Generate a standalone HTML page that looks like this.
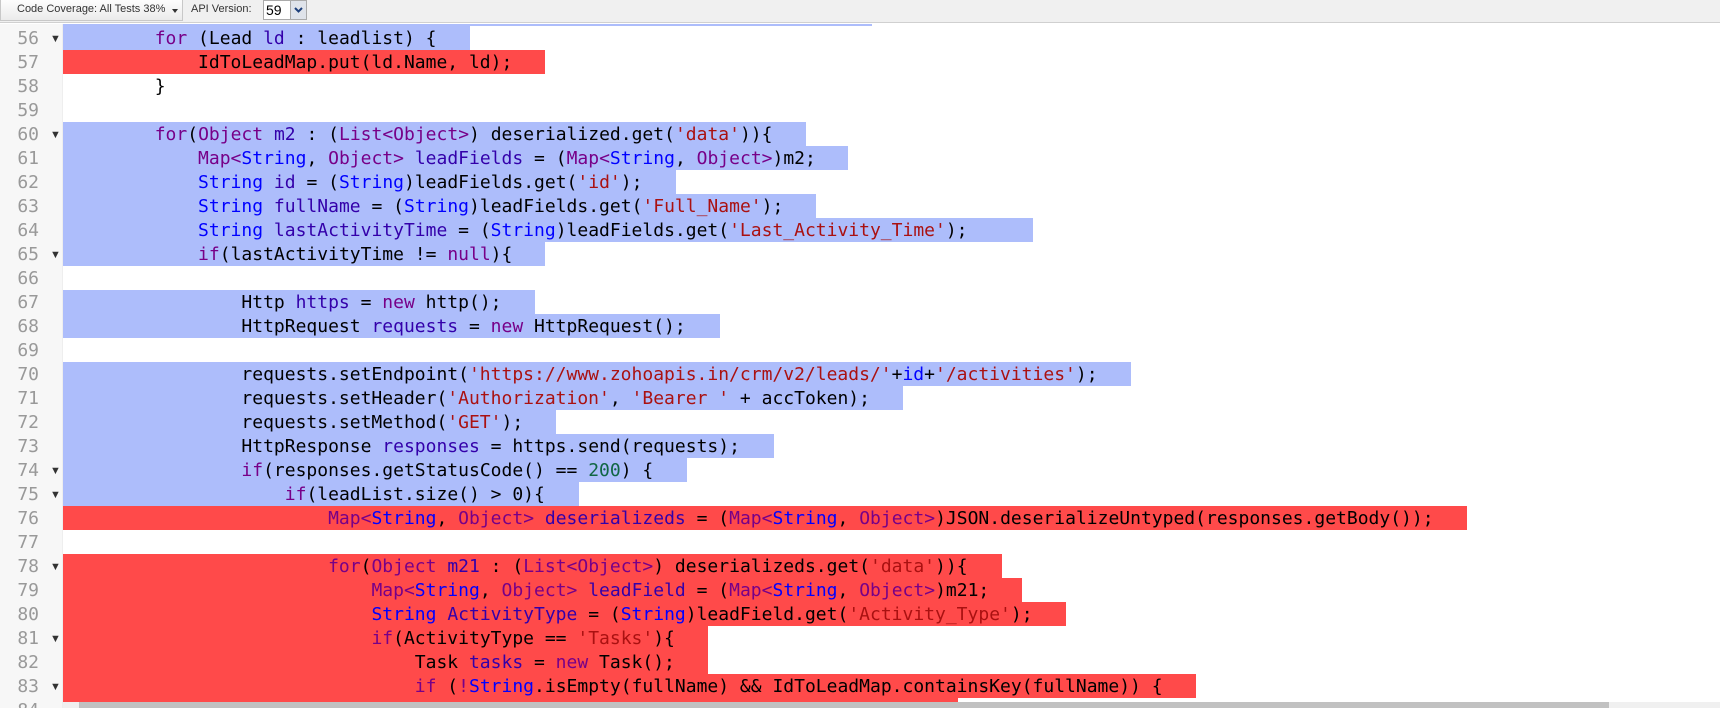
<!DOCTYPE html>
<html><head><meta charset="utf-8"><style>
*{margin:0;padding:0;box-sizing:border-box}
body{width:1720px;height:708px;overflow:hidden;background:#fff;position:relative;font-family:"Liberation Sans",sans-serif}
#tb{position:absolute;left:0;top:0;width:1720px;height:23px;background:#f0f0f0;border-bottom:1px solid #d0d0d0}
#btn{position:absolute;left:0;top:0;width:183px;height:21px;background:linear-gradient(#fdfdfd,#ebebeb);border:1px solid #c8c8c8;border-top:none;font-size:11px;color:#333;line-height:19px;padding-left:16px}
#btn:after{content:"";position:absolute;left:171px;top:9px;border:3px solid transparent;border-top:4px solid #333}
#api{position:absolute;left:191px;top:0;font-size:11px;line-height:19px;color:#333}
#sel{position:absolute;left:263px;top:0;width:28px;height:20px;background:#fff;border:1px solid #aaa;font-size:14px;line-height:18px;padding-left:2px;color:#000}
#selb{position:absolute;left:290px;top:0;width:17px;height:20px;background:#dfe3ea;border:1px solid #aaa}
#ed{position:absolute;left:0;top:24px;width:1720px;height:684px;overflow:hidden}
#gut{position:absolute;left:0;top:0;width:63px;height:686px;background:#f7f7f7;border-right:1px solid #eee}
.r{position:absolute;left:0;height:24px}
.hb{background:#adbdfb}.hr{background:#ff4a4a}
.ln{position:absolute;left:0;width:39px;text-align:right;font-family:"DejaVu Sans Mono","Liberation Mono",monospace;font-size:18px;line-height:24px;color:#999;height:24px}
.ar{position:absolute;left:50px;font-size:11px;line-height:24px;color:#333;height:24px}
pre{position:absolute;left:68px;top:0;font-family:"DejaVu Sans Mono","Liberation Mono",monospace;font-size:18px;line-height:24px;color:#000}
.k{color:#708}.t{color:#00f}.d{color:#30a}.s{color:#a11}.n{color:#164}
#sb{position:absolute;left:63px;top:702px;width:1657px;height:6px;background:#f0f0f0}
#th{position:absolute;left:79px;top:702px;width:1530px;height:6px;background:#c1c1c1}
</style></head><body>
<div id="tb"><div id="btn">Code Coverage: All Tests 38%</div><div id="api">API Version:</div><div id="sel">59</div><div id="selb"><svg width="15" height="18" viewBox="0 0 15 18"><path d="M4 7l3.5 3.5L11 7" stroke="#1d3f7a" stroke-width="2" fill="none"/></svg></div></div>
<div id="ed">
<div id="gut"></div>
<div class="r hb" style="top:-21.6px;left:63px;width:809px"></div>
<div class="r hb" style="top:2.4px;left:63px;width:407px"></div>
<div class="r hr" style="top:26.4px;left:63px;width:482px"></div>
<div class="r hb" style="top:98.4px;left:63px;width:743px"></div>
<div class="r hb" style="top:122.4px;left:63px;width:785px"></div>
<div class="r hb" style="top:146.4px;left:63px;width:613px"></div>
<div class="r hb" style="top:170.4px;left:63px;width:753px"></div>
<div class="r hb" style="top:194.4px;left:63px;width:970px"></div>
<div class="r hb" style="top:218.4px;left:63px;width:482px"></div>
<div class="r hb" style="top:266.4px;left:63px;width:472px"></div>
<div class="r hb" style="top:290.4px;left:63px;width:657px"></div>
<div class="r hb" style="top:338.4px;left:63px;width:1068px"></div>
<div class="r hb" style="top:362.4px;left:63px;width:840px"></div>
<div class="r hb" style="top:386.4px;left:63px;width:493px"></div>
<div class="r hb" style="top:410.4px;left:63px;width:711px"></div>
<div class="r hb" style="top:434.4px;left:63px;width:624px"></div>
<div class="r hb" style="top:458.4px;left:63px;width:516px"></div>
<div class="r hr" style="top:482.4px;left:63px;width:1404px"></div>
<div class="r hr" style="top:530.4px;left:63px;width:939px"></div>
<div class="r hr" style="top:554.4px;left:63px;width:959px"></div>
<div class="r hr" style="top:578.4px;left:63px;width:1003px"></div>
<div class="r hr" style="top:602.4px;left:63px;width:645px;height:48px"></div>
<div class="r hr" style="top:650.4px;left:63px;width:1133px"></div>
<div class="r hr" style="top:674.4px;left:63px;width:895px"></div>
<div style="position:absolute;top:3.4px;left:0">
<div class="ln" style="top:0">56</div><div class="ar" style="top:0">▼</div>
<div class="ln" style="top:24px">57</div>
<div class="ln" style="top:48px">58</div>
<div class="ln" style="top:72px">59</div>
<div class="ln" style="top:96px">60</div><div class="ar" style="top:96px">▼</div>
<div class="ln" style="top:120px">61</div>
<div class="ln" style="top:144px">62</div>
<div class="ln" style="top:168px">63</div>
<div class="ln" style="top:192px">64</div>
<div class="ln" style="top:216px">65</div><div class="ar" style="top:216px">▼</div>
<div class="ln" style="top:240px">66</div>
<div class="ln" style="top:264px">67</div>
<div class="ln" style="top:288px">68</div>
<div class="ln" style="top:312px">69</div>
<div class="ln" style="top:336px">70</div>
<div class="ln" style="top:360px">71</div>
<div class="ln" style="top:384px">72</div>
<div class="ln" style="top:408px">73</div>
<div class="ln" style="top:432px">74</div><div class="ar" style="top:432px">▼</div>
<div class="ln" style="top:456px">75</div><div class="ar" style="top:456px">▼</div>
<div class="ln" style="top:480px">76</div>
<div class="ln" style="top:504px">77</div>
<div class="ln" style="top:528px">78</div><div class="ar" style="top:528px">▼</div>
<div class="ln" style="top:552px">79</div>
<div class="ln" style="top:576px">80</div>
<div class="ln" style="top:600px">81</div><div class="ar" style="top:600px">▼</div>
<div class="ln" style="top:624px">82</div>
<div class="ln" style="top:648px">83</div><div class="ar" style="top:648px">▼</div>
<div class="ln" style="top:672px">84</div>
</div>
<pre style="top:3.4px">        <span class="k">for</span> (Lead <span class="d">ld</span> : leadlist) {
            IdToLeadMap.put(ld.Name, ld);
        }

        <span class="k">for</span>(<span class="k">Object</span> <span class="d">m2</span> : (<span class="k">List&lt;Object&gt;</span>) deserialized.get(<span class="s">'data'</span>)){
            <span class="k">Map&lt;</span><span class="t">String</span>, <span class="k">Object&gt;</span> <span class="d">leadFields</span> = (<span class="k">Map&lt;</span><span class="t">String</span>, <span class="k">Object&gt;</span>)m2;
            <span class="t">String</span> <span class="d">id</span> = (<span class="t">String</span>)leadFields.get(<span class="s">'id'</span>);
            <span class="t">String</span> <span class="d">fullName</span> = (<span class="t">String</span>)leadFields.get(<span class="s">'Full_Name'</span>);
            <span class="t">String</span> <span class="d">lastActivityTime</span> = (<span class="t">String</span>)leadFields.get(<span class="s">'Last_Activity_Time'</span>);
            <span class="k">if</span>(lastActivityTime != <span class="k">null</span>){

                Http <span class="d">https</span> = <span class="k">new</span> http();
                HttpRequest <span class="d">requests</span> = <span class="k">new</span> HttpRequest();

                requests.setEndpoint(<span class="s">'https://www.zohoapis.in/crm/v2/leads/'</span>+<span class="t">id</span>+<span class="s">'/activities'</span>);
                requests.setHeader(<span class="s">'Authorization'</span>, <span class="s">'Bearer '</span> + accToken);
                requests.setMethod(<span class="s">'GET'</span>);
                HttpResponse <span class="d">responses</span> = https.send(requests);
                <span class="k">if</span>(responses.getStatusCode() == <span class="n">200</span>) {
                    <span class="k">if</span>(leadList.size() &gt; 0){
                        <span class="k">Map&lt;</span><span class="t">String</span>, <span class="k">Object&gt;</span> <span class="d">deserializeds</span> = (<span class="k">Map&lt;</span><span class="t">String</span>, <span class="k">Object&gt;</span>)JSON.deserializeUntyped(responses.getBody());

                        <span class="k">for</span>(<span class="k">Object</span> <span class="d">m21</span> : (<span class="k">List&lt;Object&gt;</span>) deserializeds.get(<span class="s">'data'</span>)){
                            <span class="k">Map&lt;</span><span class="t">String</span>, <span class="k">Object&gt;</span> <span class="d">leadField</span> = (<span class="k">Map&lt;</span><span class="t">String</span>, <span class="k">Object&gt;</span>)m21;
                            <span class="t">String</span> <span class="d">ActivityType</span> = (<span class="t">String</span>)leadField.get(<span class="s">'Activity_Type'</span>);
                            <span class="k">if</span>(ActivityType == <span class="s">'Tasks'</span>){
                                Task <span class="d">tasks</span> = <span class="k">new</span> Task();
                                <span class="k">if</span> (<span class="k">!</span><span class="t">String</span>.isEmpty(fullName) &amp;&amp; IdToLeadMap.containsKey(fullName)) {
</pre>
<div style="position:absolute;left:70px;top:679px;width:0;height:0;border:3px solid transparent;border-right:3px solid #777"></div>
</div>
<div id="sb"></div><div id="th"></div>
</body></html>
